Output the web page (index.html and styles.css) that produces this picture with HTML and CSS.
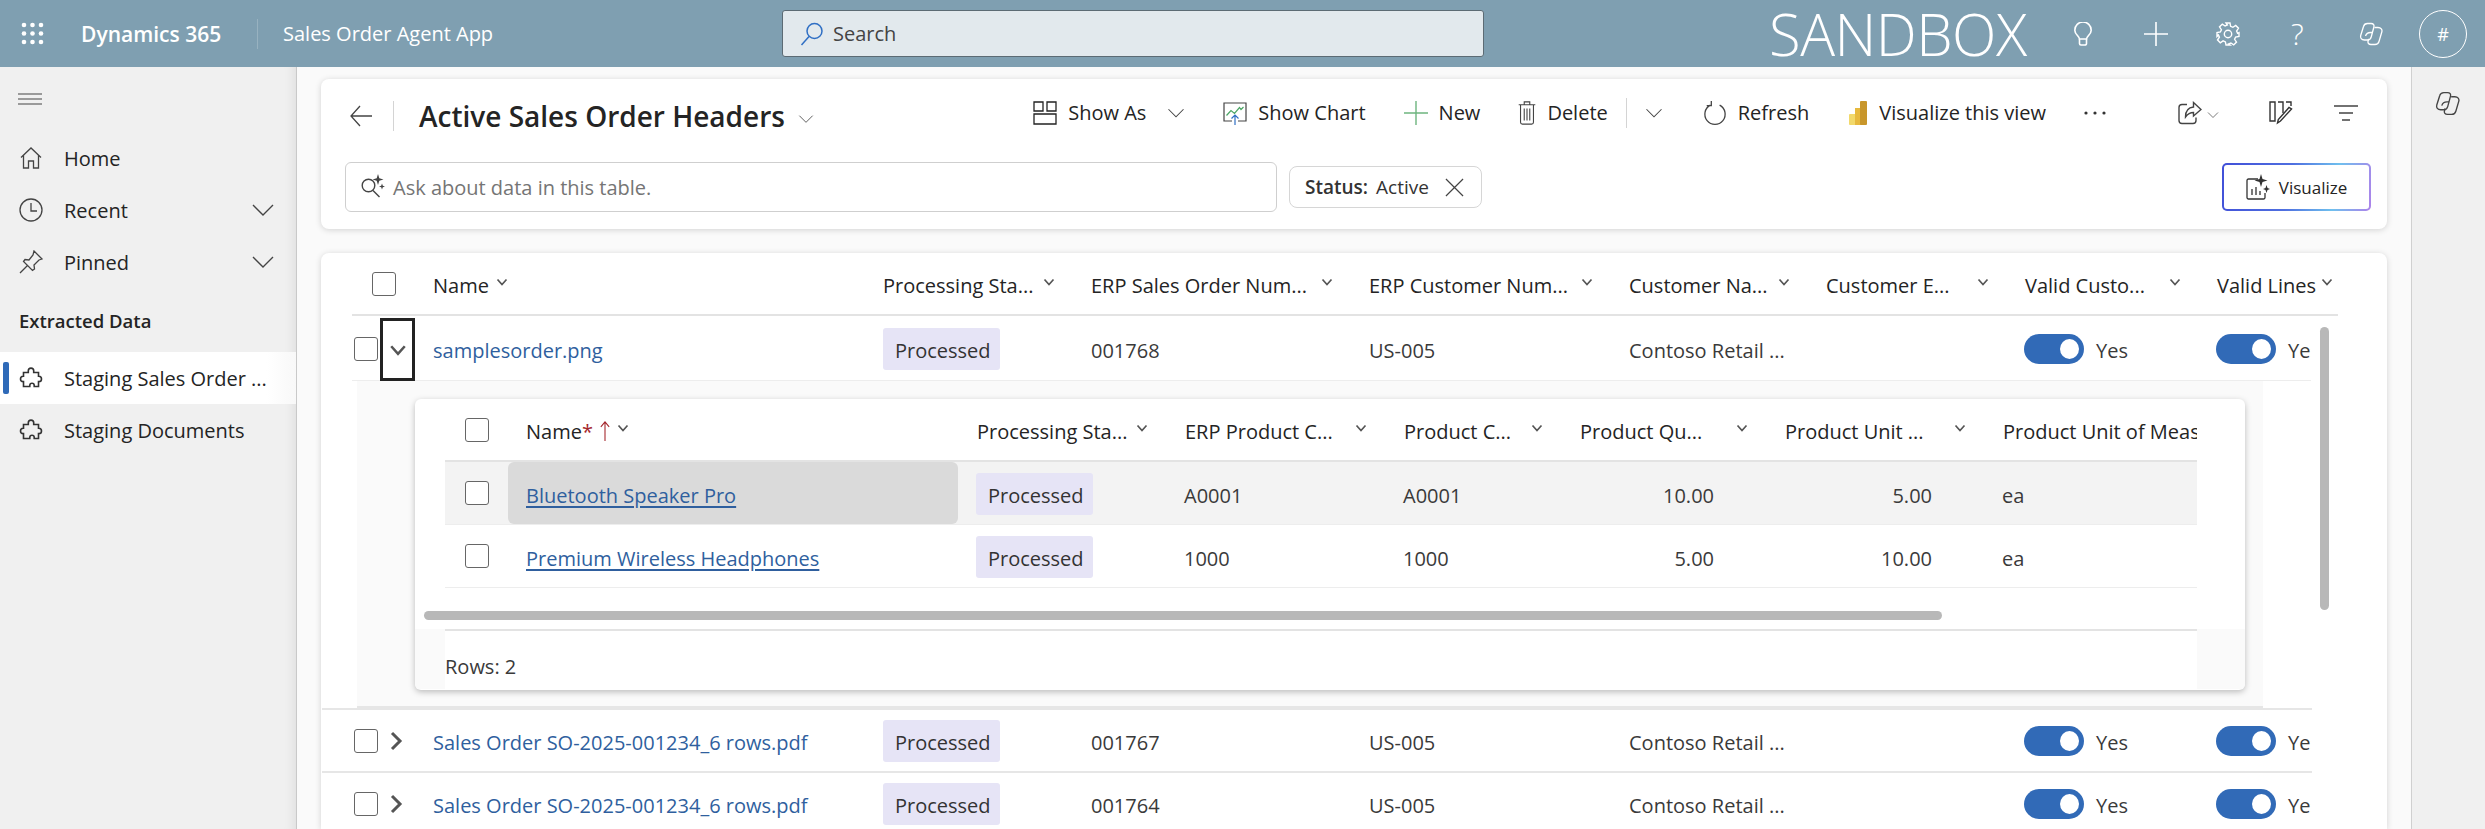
FILE: index.html
```html
<!DOCTYPE html>
<html lang="en">
<head>
  <meta charset="UTF-8" />
  <title>Active Sales Order Headers</title>
  <link rel="stylesheet" href="styles.css">
</head>
<body>
  <svg class="sprite" width="0" height="0">
    <symbol id="chev" viewBox="0 0 24 24"><path d="M2 7l10 10L22 7" fill="none" stroke="currentColor" stroke-width="1.4"/></symbol>
    <symbol id="chev-bold" viewBox="0 0 12 12"><path d="M1.5 3.5L6 8.5l4.5-5" fill="none" stroke="currentColor" stroke-width="1.7"/></symbol>
    <symbol id="chev-right" viewBox="0 0 14 22"><path d="M3 3l8 8-8 8" fill="none" stroke="currentColor" stroke-width="3"/></symbol>
    <symbol id="puzzle" viewBox="0 0 24 24"><path d="M9.3 4.8a2.7 2.7 0 0 1 5.4 0V6.5h4.8v3.7h.3a2.7 2.7 0 0 1 0 5.4h-.3v4.9h-4.3v-1a2.2 2.2 0 0 0-4.4 0v1H4.5v-4.9h-.3a2.7 2.7 0 0 1 0-5.4h.3V6.5h4.8z" fill="none" stroke="currentColor" stroke-width="1.6"/></symbol>
    <symbol id="copilot" viewBox="0 0 24 24"><g fill="none" stroke="currentColor" stroke-width="1.3"><path d="M8.500 1.500h3.500c2.400 0 3.400 1.500 2.900 3.500l-2.700 10c-.5 1.900-1.700 3-3.700 3H5.500C2.500 18 1 16 1.700 13.500L4.500 4.500C5 2.700 6.500 1.500 8.500 1.500z"/><path d="M15.500 5.500H19c3 0 4.500 2 3.800 4.500l-2.800 9.500c-.5 1.800-2 3-4 3h-4c-2.400 0-3.400-1.500-2.900-3.500l.6-2.200"/><path d="M6.500 14c.8-2.500 2.500-3.500 5-3.500h2"/></g></symbol>
  </svg>

  <header class="topbar">
    <svg class="waffle" viewBox="0 0 23 23" fill="#fff">
      <circle cx="3" cy="3" r="2.300"/><circle cx="11.500" cy="3" r="2.300"/><circle cx="20" cy="3" r="2.300"/>
      <circle cx="3" cy="11.500" r="2.300"/><circle cx="11.500" cy="11.500" r="2.300"/><circle cx="20" cy="11.500" r="2.300"/>
      <circle cx="3" cy="20" r="2.300"/><circle cx="11.500" cy="20" r="2.300"/><circle cx="20" cy="20" r="2.300"/>
    </svg>
    <span class="brand">Dynamics 365</span>
    <span class="app-name">Sales Order Agent App</span>
    <div class="global-search">
      <svg class="search-icon" viewBox="0 0 24 24" fill="none" stroke="#2f6fc4" stroke-width="1.500"><circle cx="14.500" cy="9" r="7.500"/><path d="M9 14.500L1.500 23"/></svg>
      <span>Search</span>
    </div>
    <span class="env">SANDBOX</span>
    <svg class="top-icon bulb" viewBox="0 0 18 24" fill="none" stroke="#fff" stroke-width="1.600"><path d="M5.500 17c-.3-3-4.700-4.500-4.700-8.800a8.200 8.200 0 0 1 16.400 0c0 4.300-4.400 5.800-4.700 8.800z"/><path d="M5.500 17v4.500A1.500 1.500 0 0 0 7 23h4a1.500 1.500 0 0 0 1.500-1.500V17"/></svg>
    <svg class="top-icon plus" viewBox="0 0 24 24" stroke="#fff" stroke-width="1.600"><path d="M12 0v24M0 12h24"/></svg>
    <svg class="top-icon gear" viewBox="0 0 24 24" fill="none" stroke="#fff" stroke-width="1.400"><circle cx="12" cy="12" r="3.700"/><path d="M10 1h4l.6 3.300 2.300 1 2.800-1.900 2.800 2.800-1.900 2.800 1 2.300L23 10.600v3.800l-3.400.6-1 2.300 1.900 2.800-2.800 2.800-2.800-1.900-2.300 1L14 23h-4l-.6-3.100-2.300-1-2.800 1.900-2.800-2.800 1.900-2.800-1-2.300L1 14.400v-3.800l3.400-.6 1-2.300-1.900-2.800 2.800-2.800 2.800 1.900 2.300-1z"/></svg>
    <span class="help">?</span>
    <svg class="top-icon copilot"><use href="#copilot"/></svg>
    <span class="avatar">#</span>
  </header>

  <div class="app">
    <nav class="sidebar">
      <div class="burger"><svg viewBox="0 0 24 12" stroke="#444" stroke-width="1.200"><path d="M0 1h24M0 6h24M0 11h24"/></svg></div>
      <a class="nav-item">
        <svg class="nav-icon" viewBox="0 0 24 24" fill="none" stroke="#444" stroke-width="1.300"><path d="M2 11.500L12 2l10 9.500M4.500 9.500V22h5v-7h5v7h5V9.500"/></svg>
        <span>Home</span>
      </a>
      <a class="nav-item">
        <svg class="nav-icon" viewBox="0 0 24 24" fill="none" stroke="#444" stroke-width="1.300"><circle cx="12" cy="12" r="11"/><path d="M12 5v8h6"/></svg>
        <span>Recent</span>
        <svg class="nav-chev"><use href="#chev"/></svg>
      </a>
      <a class="nav-item">
        <svg class="nav-icon" viewBox="0 0 24 24" fill="none" stroke="#444" stroke-width="1.300"><path d="M15 1l8 8-3 1-5 5 .5 4-2 1.500-9-9L6 9.500l4 .5 4-5zM8.500 15.500L1 23"/></svg>
        <span>Pinned</span>
        <svg class="nav-chev"><use href="#chev"/></svg>
      </a>
      <div class="nav-heading">Extracted Data</div>
      <a class="nav-item is-active">
        <svg class="nav-icon"><use href="#puzzle"/></svg>
        <span>Staging Sales Order ...</span>
      </a>
      <a class="nav-item">
        <svg class="nav-icon"><use href="#puzzle"/></svg>
        <span>Staging Documents</span>
      </a>
    </nav>

    <main class="content">
      <section class="card command-card">
        <div class="command-row">
          <svg class="back" viewBox="0 0 22 22" fill="none" stroke="#444" stroke-width="1.300"><path d="M22 11H1M10 1L1 11l9 10"/></svg>
          <span class="vr"></span>
          <h1 class="view-title">Active Sales Order Headers</h1>
          <svg class="title-chev"><use href="#chev"/></svg>

          <div class="toolbar">
            <button class="cmd">
              <svg class="cmd-icon" viewBox="0 0 24 24" fill="none" stroke="#222" stroke-width="1.300"><path d="M1 1h9v9H1zM14 1h9v9h-9zM1 13h22v10H1z"/></svg>
              Show As
              <svg class="cmd-chev"><use href="#chev"/></svg>
            </button>
            <button class="cmd">
              <svg class="cmd-icon" viewBox="0 0 24 24" fill="none" stroke="#444" stroke-width="1.200"><path d="M9 20H1V2h22v18h-8"/><path d="M3.500 14.500l4.500-5 3.500 3 5-6 1.500 2 2.500-2.500" stroke="#4aa564"/><path d="M12 24V14M8.500 17.500L12 14l3.500 3.500" stroke="#2f6fc4"/></svg>
              Show Chart
            </button>
            <button class="cmd">
              <svg class="cmd-icon" viewBox="0 0 24 24" stroke="#6db57f" stroke-width="1.400"><path d="M12 0v24M0 12h24"/></svg>
              New
            </button>
            <button class="cmd">
              <svg class="cmd-icon cmd-icon--narrow" viewBox="0 0 18 26" fill="none" stroke="#444" stroke-width="1.200"><path d="M0 4h18M6 4V1h6v3M2 4v19a2 2 0 0 0 2 2h10a2 2 0 0 0 2-2V4M6 8v13M9 8v13M12 8v13"/></svg>
              Delete
            </button>
            <span class="vr vr--toolbar"></span>
            <svg class="cmd-chev cmd-chev--solo"><use href="#chev"/></svg>
            <button class="cmd cmd--refresh">
              <svg class="cmd-icon" viewBox="0 0 24 26" fill="none" stroke="#444" stroke-width="1.400"><path d="M7 4.500a11 11 0 1 0 10 0M8 0v5H3"/></svg>
              Refresh
            </button>
            <button class="cmd cmd--bi">
              <svg class="cmd-icon cmd-icon--narrow" viewBox="0 0 18 24"><rect x="0" y="13" width="7" height="11" rx="1" fill="#f2d96b"/><rect x="6" y="7" width="6" height="17" fill="#e7b93e"/><rect x="11" y="0" width="7" height="24" rx="1" fill="#c8962b"/></svg>
              Visualize this view
            </button>
            <svg class="more" viewBox="0 0 22 4" fill="#333"><circle cx="2" cy="2" r="1.600"/><circle cx="11" cy="2" r="1.600"/><circle cx="20" cy="2" r="1.600"/></svg>
            <div class="toolbar-end">
              <svg class="cmd-icon share" viewBox="0 0 24 24" fill="none" stroke="#444" stroke-width="1.400"><path d="M9 3.500H4A3 3 0 0 0 1 6.500v13a3 3 0 0 0 3 3h11a3 3 0 0 0 3-3v-3"/><path d="M15.500 1.500L23 8.500l-7.500 6.500v-3.500c-3.500 0-5.500 1-8 4.500 0-6 3-9.500 8-10z"/></svg>
              <svg class="small-chev"><use href="#chev"/></svg>
              <svg class="cmd-icon edit-cols" viewBox="0 0 24 24" fill="none" stroke="#333" stroke-width="1.400"><path d="M1 1h5v19H1zM9 1h5v11M17 1h5v4"/><path d="M22.500 8l-11 12-3 2 .8-3.500L20 6.500z"/></svg>
              <svg class="cmd-icon filter" viewBox="0 0 24 16" stroke="#444" stroke-width="1.400"><path d="M0 1h24M5 8h14M8 15h8"/></svg>
            </div>
          </div>
        </div>

        <div class="filter-row">
          <div class="ask-box">
            <svg class="ask-icon" viewBox="0 0 24 24" fill="none" stroke="#444" stroke-width="1.400"><circle cx="7.500" cy="11.500" r="6.300"/><path d="M12 16.500l6.500 6.500"/><path d="M17 0l1.300 4.200 4.200 1.300-4.200 1.300L17 11l-1.300-4.200-4.200-1.300 4.200-1.300zM21 9.500l.8 2.200 2.200.8-2.200.8-.8 2.200-.8-2.200-2.200-.8 2.200-.8z" fill="#444" stroke="none"/></svg>
            <span>Ask about data in this table.</span>
          </div>
          <div class="chip">
            <b>Status:</b>
            <span>Active</span>
            <svg class="chip-x" viewBox="0 0 20 20" stroke="#444" stroke-width="1.300"><path d="M1 1l18 18M19 1L1 19"/></svg>
          </div>
          <button class="visualize">
            <svg class="vis-icon" viewBox="0 0 24 26" fill="none" stroke="#333" stroke-width="1.300"><path d="M12 5H2.500A1.500 1.500 0 0 0 1 6.500v17A1.500 1.500 0 0 0 2.500 25h15a1.500 1.500 0 0 0 1.500-1.500V19M6 21v-6M10 21v-8M14 21v-4"/><path d="M15 0l1.500 5 5 1.500-5 1.500L15 13l-1.500-5-5-1.500 5-1.500zM20.500 11l1 3 2.500 1-2.500 1-1 3-1-3-2.500-1 2.500-1z" fill="#333" stroke="none"/></svg>
            Visualize
          </button>
        </div>
      </section>

      <section class="card grid-card">
        <div class="outer-grid outer-head">
          <div class="hcell hcell--check"><span class="check"></span></div>
          <div class="hcell hcell--tight">Name <svg class="sort"><use href="#chev-bold"/></svg></div>
          <div class="hcell">Processing Sta... <svg class="sort"><use href="#chev-bold"/></svg></div>
          <div class="hcell">ERP Sales Order Num... <svg class="sort"><use href="#chev-bold"/></svg></div>
          <div class="hcell">ERP Customer Num... <svg class="sort"><use href="#chev-bold"/></svg></div>
          <div class="hcell">Customer Na... <svg class="sort"><use href="#chev-bold"/></svg></div>
          <div class="hcell">Customer E... <svg class="sort"><use href="#chev-bold"/></svg></div>
          <div class="hcell">Valid Custo... <svg class="sort"><use href="#chev-bold"/></svg></div>
          <div class="hcell hcell--last">Valid Lines <svg class="sort"><use href="#chev-bold"/></svg></div>
        </div>

        <div class="outer-grid outer-row outer-row--first">
          <div class="cell-check"><span class="check"></span></div>
          <div class="expander is-open"><svg><use href="#chev-bold"/></svg></div>
          <div class="cell"><a class="link">samplesorder.png</a></div>
          <div class="cell"><span class="pill">Processed</span></div>
          <div class="cell">001768</div>
          <div class="cell">US-005</div>
          <div class="cell">Contoso Retail ...</div>
          <div class="cell"></div>
          <div class="cell"><span class="toggle"></span>Yes</div>
          <div class="cell cell--clip"><span class="toggle"></span>Yes</div>
        </div>

        <div class="subgrid-wrap">
          <div class="subgrid-card">
            <div class="inner-grid inner-head">
              <div class="hcell hcell--inner-check"><span class="check"></span></div>
              <div class="hcell hcell--tight hcell--inner-name">Name<i class="req">*</i>
                <svg class="up" viewBox="0 0 12 24" fill="none" stroke="#a4262c" stroke-width="1.300"><path d="M6 24V1M1 7l5-6 5 6"/></svg>
                <svg class="sort"><use href="#chev-bold"/></svg>
              </div>
              <div class="hcell">Processing Sta... <svg class="sort"><use href="#chev-bold"/></svg></div>
              <div class="hcell">ERP Product C... <svg class="sort"><use href="#chev-bold"/></svg></div>
              <div class="hcell">Product C... <svg class="sort"><use href="#chev-bold"/></svg></div>
              <div class="hcell">Product Qu... <svg class="sort"><use href="#chev-bold"/></svg></div>
              <div class="hcell">Product Unit ... <svg class="sort"><use href="#chev-bold"/></svg></div>
              <div class="hcell hcell--clip">Product Unit of Measure</div>
            </div>

            <div class="inner-grid inner-row is-hover">
              <div class="cell-check cell-check--inner"><span class="check"></span></div>
              <div class="cell cell--name is-focus"><a class="link link--line">Bluetooth Speaker Pro</a></div>
              <div class="cell"><span class="pill">Processed</span></div>
              <div class="cell">A0001</div>
              <div class="cell">A0001</div>
              <div class="cell cell--num">10.00</div>
              <div class="cell cell--num">5.00</div>
              <div class="cell">ea</div>
            </div>
            <div class="inner-grid inner-row">
              <div class="cell-check cell-check--inner"><span class="check"></span></div>
              <div class="cell cell--name"><a class="link link--line">Premium Wireless Headphones</a></div>
              <div class="cell"><span class="pill">Processed</span></div>
              <div class="cell">1000</div>
              <div class="cell">1000</div>
              <div class="cell cell--num">5.00</div>
              <div class="cell cell--num">10.00</div>
              <div class="cell">ea</div>
            </div>

            <div class="hscroll"></div>
            <div class="subgrid-foot"><div class="foot-inner">Rows: 2</div></div>
          </div>
        </div>

        <div class="outer-grid outer-row">
          <div class="cell-check"><span class="check"></span></div>
          <div class="expander"><svg viewBox="0 0 14 22"><use href="#chev-right"/></svg></div>
          <div class="cell"><a class="link">Sales Order SO-2025-001234_6 rows.pdf</a></div>
          <div class="cell"><span class="pill">Processed</span></div>
          <div class="cell">001767</div>
          <div class="cell">US-005</div>
          <div class="cell">Contoso Retail ...</div>
          <div class="cell"></div>
          <div class="cell"><span class="toggle"></span>Yes</div>
          <div class="cell cell--clip"><span class="toggle"></span>Yes</div>
        </div>
        <div class="outer-grid outer-row">
          <div class="cell-check"><span class="check"></span></div>
          <div class="expander"><svg viewBox="0 0 14 22"><use href="#chev-right"/></svg></div>
          <div class="cell"><a class="link">Sales Order SO-2025-001234_6 rows.pdf</a></div>
          <div class="cell"><span class="pill">Processed</span></div>
          <div class="cell">001764</div>
          <div class="cell">US-005</div>
          <div class="cell">Contoso Retail ...</div>
          <div class="cell"></div>
          <div class="cell"><span class="toggle"></span>Yes</div>
          <div class="cell cell--clip"><span class="toggle"></span>Yes</div>
        </div>

        <div class="vscroll"></div>
      </section>
    </main>

    <aside class="rail">
      <svg class="rail-icon"><use href="#copilot"/></svg>
    </aside>
  </div>
</body>
</html>
```

FILE: styles.css
```css
* {
  box-sizing: border-box;
}

html,
body {
  margin: 0;
  height: 100%;
  overflow: hidden;
}

body {
  font-family: "Open Sans", "Noto Sans", sans-serif;
  font-size: 20px;
  color: #242424;
  background-color: #fafafa;
  display: flex;
  flex-direction: column;
}

.sprite {
  position: absolute;
}

svg {
  display: block;
  flex-shrink: 0;
}

/* Barra superior */
.topbar {
  height: 67px;
  flex-shrink: 0;
  background-color: #7f9fb1;
  color: #fff;
  display: flex;
  align-items: center;
  padding-left: 21px;
}

.waffle {
  width: 23px;
  height: 23px;
}

.brand {
  margin-left: 37px;
  width: 177px;
  font-size: 21px;
  font-weight: 600;
  border-right: 1px solid #98b2c0;
  line-height: 30px;
  white-space: nowrap;
}

.app-name {
  margin-left: 25px;
  width: 499px;
}

.global-search {
  width: 702px;
  height: 47px;
  background-color: #e2e9ed;
  border: 1px solid #5c6b74;
  border-radius: 3px;
  color: #444;
  display: flex;
  align-items: center;
  padding-left: 17px;
  gap: 9px;
}

.search-icon {
  width: 24px;
  height: 24px;
}

.env {
  margin-left: 285px;
  width: 305px;
  font-size: 58px;
  font-weight: 300;
  line-height: 60px;
  letter-spacing: -0.5px;
}

.top-icon {
  width: 24px;
  height: 24px;
}

.bulb {
  width: 18px;
}

.plus {
  margin-left: 52px;
}

.gear {
  margin-left: 48px;
}

.help {
  margin-left: 51px;
  width: 16px;
  font-size: 30px;
  font-weight: 300;
  line-height: 30px;
}

.copilot {
  margin-left: 52px;
}

.avatar {
  margin-left: 36px;
  width: 48px;
  height: 48px;
  border: 1px solid #fff;
  border-radius: 50%;
  font-size: 18px;
  display: flex;
  align-items: center;
  justify-content: center;
}

.app {
  flex: 1;
  min-height: 0;
  display: flex;
}

/* Menu lateral */
.sidebar {
  width: 297px;
  flex-shrink: 0;
  background-color: #f0f0f0;
  border-right: 1px solid #c9c9c9;
  box-shadow: inset -14px 0 12px -12px rgba(0, 0, 0, 0.08);
}

.burger {
  height: 65px;
  padding: 26px 0 0 18px;
}

.burger svg {
  width: 24px;
  height: 12px;
}

.nav-item {
  height: 52px;
  display: flex;
  align-items: center;
  padding-left: 19px;
  position: relative;
  white-space: nowrap;
}

.nav-item.is-active {
  background: linear-gradient(to right, #fff 90%, #f8f8f8);
}

.nav-item.is-active::before {
  content: "";
  position: absolute;
  left: 3px;
  top: 10px;
  width: 6px;
  height: 32px;
  border-radius: 2px;
  background-color: #2f6ab8;
}

.nav-icon {
  width: 24px;
  height: 24px;
  margin-right: 21px;
  color: #333;
}

.nav-chev {
  width: 24px;
  height: 24px;
  margin-left: auto;
  margin-right: 21px;
  color: #444;
}

.nav-heading {
  height: 64px;
  padding: 20px 0 0 19px;
  font-weight: 600;
  font-size: 18.500px;
}

/* Contenido */
.content {
  flex: 1;
  min-width: 0;
  padding: 12px 24px 0;
  display: flex;
  flex-direction: column;
  gap: 24px;
  overflow: hidden;
}

.card {
  background-color: #fff;
  border-radius: 8px;
  box-shadow: 0 1px 6px rgba(0, 0, 0, 0.16);
}

.command-card {
  height: 150px;
  flex-shrink: 0;
}

.command-row {
  height: 83px;
  display: flex;
  align-items: center;
  padding: 0 0 10px 29px;
}

.back {
  width: 22px;
  height: 22px;
}

.vr {
  width: 1px;
  height: 30px;
  margin-left: 21px;
  background-color: #d4d4d4;
}

.view-title {
  margin: 0 0 0 25px;
  font-size: 28px;
  font-weight: 600;
  white-space: nowrap;
}

.title-chev {
  width: 16px;
  height: 16px;
  margin: 6px 0 0 13px;
  color: #555;
}

.toolbar {
  margin-left: auto;
  height: 100%;
  display: flex;
  align-items: center;
  gap: 38px;
  padding-right: 29px;
  padding-bottom: 6px;
}

.cmd {
  border: 0;
  padding: 0;
  background: none;
  font: inherit;
  color: inherit;
  display: flex;
  align-items: center;
  gap: 11px;
  white-space: nowrap;
}

.cmd--refresh {
  margin-left: 2px;
}

.cmd--bi {
  margin-left: 2px;
  gap: 12px;
}

.cmd-icon {
  width: 24px;
  height: 24px;
}

.cmd-icon--narrow {
  width: 18px;
}

.cmd-chev {
  width: 18px;
  height: 18px;
  margin-left: 10px;
  color: #444;
}

.cmd-chev--solo {
  margin-left: -20px;
}

.vr--toolbar {
  margin: 0 0 0 -20px;
}

.more {
  width: 22px;
  height: 4px;
}

.toolbar-end {
  margin-left: 34px;
  display: flex;
  align-items: center;
}

.small-chev {
  width: 12px;
  height: 12px;
  margin: 4px 0 0 5px;
  color: #444;
}

.edit-cols {
  margin-left: 50px;
}

.filter {
  margin-left: 41px;
  height: 16px;
}

.filter-row {
  height: 50px;
  display: flex;
  align-items: center;
  padding: 0 16px 0 24px;
}

.ask-box {
  width: 932px;
  height: 50px;
  border: 1px solid #cfcfcf;
  border-radius: 6px;
  display: flex;
  align-items: center;
  padding-left: 15px;
  gap: 8px;
  color: #757575;
}

.ask-icon {
  width: 24px;
  height: 24px;
  margin-top: -2px;
}

.chip {
  margin-left: 12px;
  width: 193px;
  height: 42px;
  border: 1px solid #d6d6d6;
  border-radius: 8px;
  display: flex;
  align-items: center;
  padding-left: 15px;
  gap: 8px;
  color: #333;
  font-size: 19px;
}

.chip b {
  font-weight: 600;
}

.chip-x {
  width: 19px;
  height: 19px;
  margin-left: 8px;
}

.visualize {
  margin-left: auto;
  width: 149px;
  height: 48px;
  border-radius: 5px;
  border: 2px solid transparent;
  background: linear-gradient(#fff, #fff) padding-box,
    linear-gradient(100deg, #4150d8 0%, #4f6fe0 45%, #6fc0ee 75%, #ad82ea 100%) border-box;
  font: inherit;
  font-size: 17px;
  color: #242424;
  display: flex;
  align-items: center;
  justify-content: center;
  gap: 9px;
}

.vis-icon {
  width: 24px;
  height: 26px;
}

/* Tabla principal */
.grid-card {
  flex: 1;
  min-height: 0;
  position: relative;
  overflow: hidden;
  border-radius: 8px 8px 0 0;
}

.outer-grid {
  display: grid;
  grid-template-columns: 59px 37px 450px 208px 278px 260px 197px 199px 192px 110px;
}

.outer-head {
  height: 63px;
  margin-left: 31px;
  width: 1986px;
  grid-template-columns: 65px 450px 208px 278px 260px 197px 199px 192px 137px;
  border-bottom: 2px solid #e3e3e3;
}

.hcell {
  min-width: 0;
  display: flex;
  align-items: center;
  justify-content: space-between;
  padding: 3px 20px 0 16px;
  font-weight: 500;
  white-space: nowrap;
}

.hcell--tight {
  justify-content: flex-start;
  gap: 7px;
}

.hcell--last {
  justify-content: flex-start;
  gap: 5px;
  padding-right: 0;
}

.hcell--check {
  padding-left: 20px;
  padding-top: 0;
}

.sort {
  width: 12px;
  height: 12px;
  color: #555;
  margin-top: -6px;
}

.check {
  display: block;
  width: 24px;
  height: 24px;
  border: 1px solid #666;
  border-radius: 3px;
  background-color: #fff;
}

.outer-row {
  width: 1990px;
  height: 63px;
  border-top: 2px solid #e6e6e6;
  margin-left: 1px;
  align-items: center;
  color: #3a3a3a;
  grid-template-columns: 58px 37px 450px 208px 278px 260px 197px 199px 192px 110px;
}

.outer-row--first {
  height: 65px;
  width: 1959px;
  margin-left: 31px;
  border-top: 0;
  border-bottom: 1px solid #ededed;
  grid-template-columns: 28px 37px 450px 208px 278px 260px 197px 199px 192px 110px;
}

.cell-check {
  padding-left: 32px;
}

.outer-row--first .cell-check {
  padding-left: 2px;
}

.expander {
  height: 100%;
  color: #555;
  display: flex;
  align-items: center;
  justify-content: center;
  padding-right: 5px;
}

.expander svg {
  width: 14px;
  height: 22px;
}

.expander.is-open {
  width: 35px;
  height: 63px;
  margin-top: 2px;
  border: 3px solid #222;
  padding-right: 0;
}

.expander.is-open svg {
  width: 18px;
  height: 18px;
}

.cell {
  min-width: 0;
  display: flex;
  align-items: center;
  padding: 3px 16px 0;
  white-space: nowrap;
}

.cell--clip {
  padding-right: 0;
  overflow: hidden;
}

.link {
  color: #2f5f9e;
}

.link--line {
  text-decoration: underline;
  text-underline-offset: 3px;
}

.pill {
  width: 117px;
  height: 42px;
  margin-top: -3px;
  padding: 3px 0 0 12px;
  background-color: #e6e4f6;
  border-radius: 3px;
  display: flex;
  align-items: center;
  color: #333;
}

.toggle {
  width: 60px;
  height: 30px;
  flex-shrink: 0;
  margin: -3px 12px 0 -1px;
  background-color: #316ab7;
  border-radius: 15px;
  position: relative;
}

.toggle::after {
  content: "";
  position: absolute;
  right: 5px;
  top: 5px;
  width: 19px;
  height: 20px;
  border-radius: 50%;
  background-color: #fff;
}

/* Subtabla */
.subgrid-wrap {
  margin-left: 36px;
  width: 1906px;
  padding: 18px 0 16px 58px;
  background-color: #fafafa;
  border-bottom: 2px solid #e6e6e6;
}

.subgrid-card {
  width: 1830px;
  height: 291px;
  background-color: #fff;
  border-radius: 6px;
  box-shadow: 0 2px 6px rgba(0, 0, 0, 0.25);
  overflow: hidden;
}

.inner-grid {
  display: grid;
  width: 1752px;
  margin-left: 30px;
  grid-template-columns: 63px 450px 208px 219px 176px 205px 218px 213px;
}

.inner-head {
  height: 63px;
  border-bottom: 2px solid #e3e3e3;
}

.inner-grid .hcell {
  padding-right: 18px;
  padding-left: 19px;
}

.inner-grid .hcell--inner-check {
  padding: 0 0 0 20px;
}

.inner-grid .hcell--inner-name {
  gap: 0;
  padding-left: 18px;
}

.inner-grid .hcell--clip {
  display: block;
  padding: 19px 0 0 19px;
  overflow: hidden;
}

.req {
  color: #a4262c;
  font-style: normal;
  margin-right: 7px;
}

.up {
  width: 10px;
  height: 22px;
  margin-right: 7px;
}

.inner-row {
  height: 63px;
  align-items: center;
  border-bottom: 1px solid #ededed;
  color: #3a3a3a;
}

.inner-row .cell {
  padding: 4px 16px 0 18px;
}

.inner-row.is-hover {
  background-color: #f3f3f3;
}

.inner-row .pill {
  margin-top: -2px;
  margin-left: 0;
}

.cell-check--inner {
  padding-left: 20px;
}

.inner-row .cell--name {
  height: 100%;
}

.cell--name.is-focus {
  background-color: #dadada;
  border-radius: 6px;
}

.inner-row .cell--num {
  justify-content: flex-end;
  padding-right: 52px;
}

.hscroll {
  width: 1518px;
  height: 9px;
  margin: 23px 0 0 9px;
  background-color: #b8b8b8;
  border-radius: 5px;
}

.subgrid-foot {
  height: 60px;
  margin-top: 9px;
  padding: 0 48px 0 30px;
  background-color: #fafafa;
}

.foot-inner {
  height: 100%;
  background-color: #fff;
  border-top: 2px solid #e3e3e3;
  display: flex;
  align-items: center;
  color: #3a3a3a;
  padding-top: 13px;
}

.vscroll {
  position: absolute;
  left: 1999px;
  top: 74px;
  width: 9px;
  height: 283px;
  border-radius: 5px;
  background-color: #b8b8b8;
}

/* Panel derecho */
.rail {
  width: 74px;
  flex-shrink: 0;
  background-color: #f0f0f0;
  border-left: 1px solid #d0d0d0;
  padding: 24px 0 0 23px;
}

.rail-icon {
  width: 25px;
  height: 25px;
  color: #444;
}
```
